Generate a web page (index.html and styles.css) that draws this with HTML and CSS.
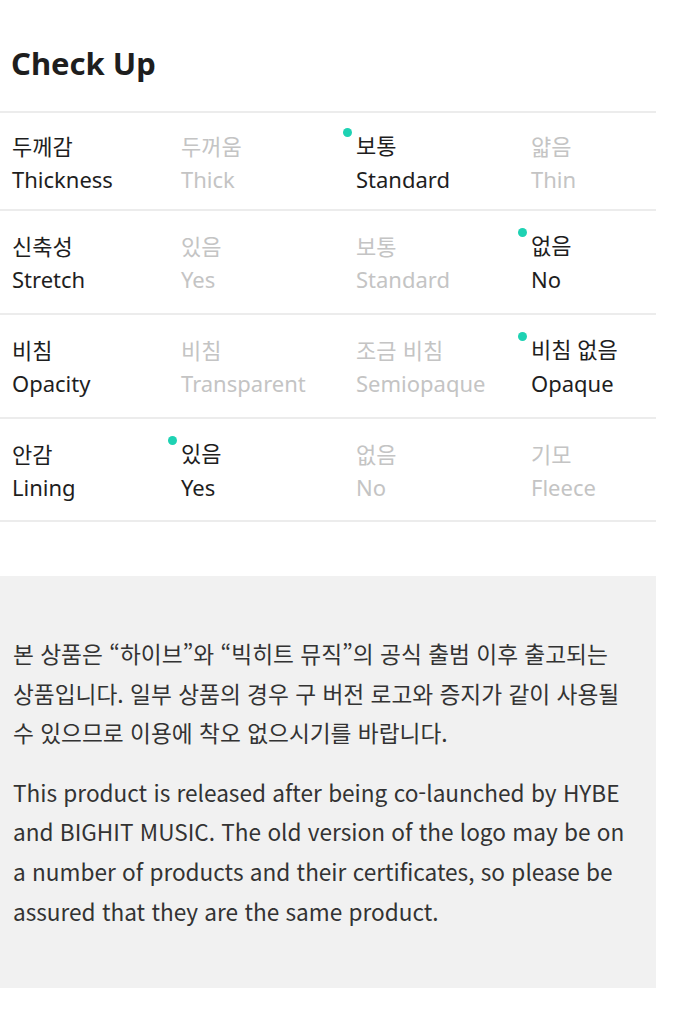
FILE: index.html
```html
<!DOCTYPE html>
<html lang="ko">
<head>
<meta charset="utf-8">
<link rel="stylesheet" href="styles.css">
</head>
<body>
<div class="page">
  <h2 class="title">Check Up</h2>
  <div class="table">
    <div class="row">
      <div class="cell label"><span>두께감</span><span>Thickness</span></div>
      <div class="cell off"><span>두꺼움</span><span>Thick</span></div>
      <div class="cell on"><i class="dot"></i><span>보통</span><span>Standard</span></div>
      <div class="cell off"><span>얇음</span><span>Thin</span></div>
    </div>
    <div class="row">
      <div class="cell label"><span>신축성</span><span>Stretch</span></div>
      <div class="cell off"><span>있음</span><span>Yes</span></div>
      <div class="cell off"><span>보통</span><span>Standard</span></div>
      <div class="cell on"><i class="dot"></i><span>없음</span><span>No</span></div>
    </div>
    <div class="row">
      <div class="cell label"><span>비침</span><span>Opacity</span></div>
      <div class="cell off"><span>비침</span><span>Transparent</span></div>
      <div class="cell off"><span>조금 비침</span><span>Semiopaque</span></div>
      <div class="cell on"><i class="dot"></i><span>비침 없음</span><span>Opaque</span></div>
    </div>
    <div class="row">
      <div class="cell label"><span>안감</span><span>Lining</span></div>
      <div class="cell on"><i class="dot"></i><span>있음</span><span>Yes</span></div>
      <div class="cell off"><span>없음</span><span>No</span></div>
      <div class="cell off"><span>기모</span><span>Fleece</span></div>
    </div>
  </div>
  <div class="notice">
    <p class="ko">본 상품은 “하이브”와 “빅히트 뮤직”의 공식 출범 이후 출고되는 상품입니다. 일부 상품의 경우 구 버전 로고와 증지가 같이 사용될 수 있으므로 이용에 착오 없으시기를 바랍니다.</p>
    <p class="en">This product is released after being co-launched by HYBE and BIGHIT MUSIC. The old version of the logo may be on a number of products and their certificates, so please be assured that they are the same product.</p>
  </div>
</div>
</body>
</html>
```
FILE: styles.css
```css
* { box-sizing: border-box; }
html, body { margin: 0; padding: 0; background: #fff; }
body { font-family: "Noto Sans", "Noto Sans CJK KR", sans-serif; color: #222; }
.page { width: 656px; padding-top: 39px; }
.title {
  margin: 0;
  padding-left: 11px;
  font-family: "Noto Sans", "Noto Sans CJK KR", sans-serif;
  font-size: 31px;
  font-weight: 700;
  line-height: 48px;
  color: #1e1e1e;
}
.table { margin-top: 24px; border-top: 2px solid #ececec; }
.row {
  display: grid;
  grid-template-columns: 181px 175px 175px 1fr;
  border-bottom: 2px solid #ececec;
  padding: 17px 0 17px;
}
.row:first-child { padding: 15px 0 13px; }
.row:last-child { padding: 17px 0 16px; }
.cell {
  position: relative;
  display: flex;
  flex-direction: column;
  font-size: 22px;
  line-height: 34px;
  white-space: nowrap;
}
.cell.label { padding-left: 12px; color: #1e1e1e; }
.cell.on { color: #1e1e1e; }
.cell.off { color: #c4c4c4; }
.cell span:first-child { font-family: "Noto Sans CJK KR", sans-serif; }
.dot {
  position: absolute;
  left: -13px;
  top: 0;
  width: 9px;
  height: 9px;
  border-radius: 50%;
  background: #1ed2b3;
}
.notice {
  margin-top: 54px;
  background: #f1f1f1;
  padding: 58px 10px 57px 13px;
  font-family: "Noto Sans CJK KR", sans-serif;
  line-height: 39.6px;
  color: #333;
}
.notice p { margin: 0; }
.notice p + p { margin-top: 20px; }
.notice .ko { font-size: 22.7px; word-break: keep-all; }
.notice .en { font-size: 22.6px; padding-right: 21px; }
```
